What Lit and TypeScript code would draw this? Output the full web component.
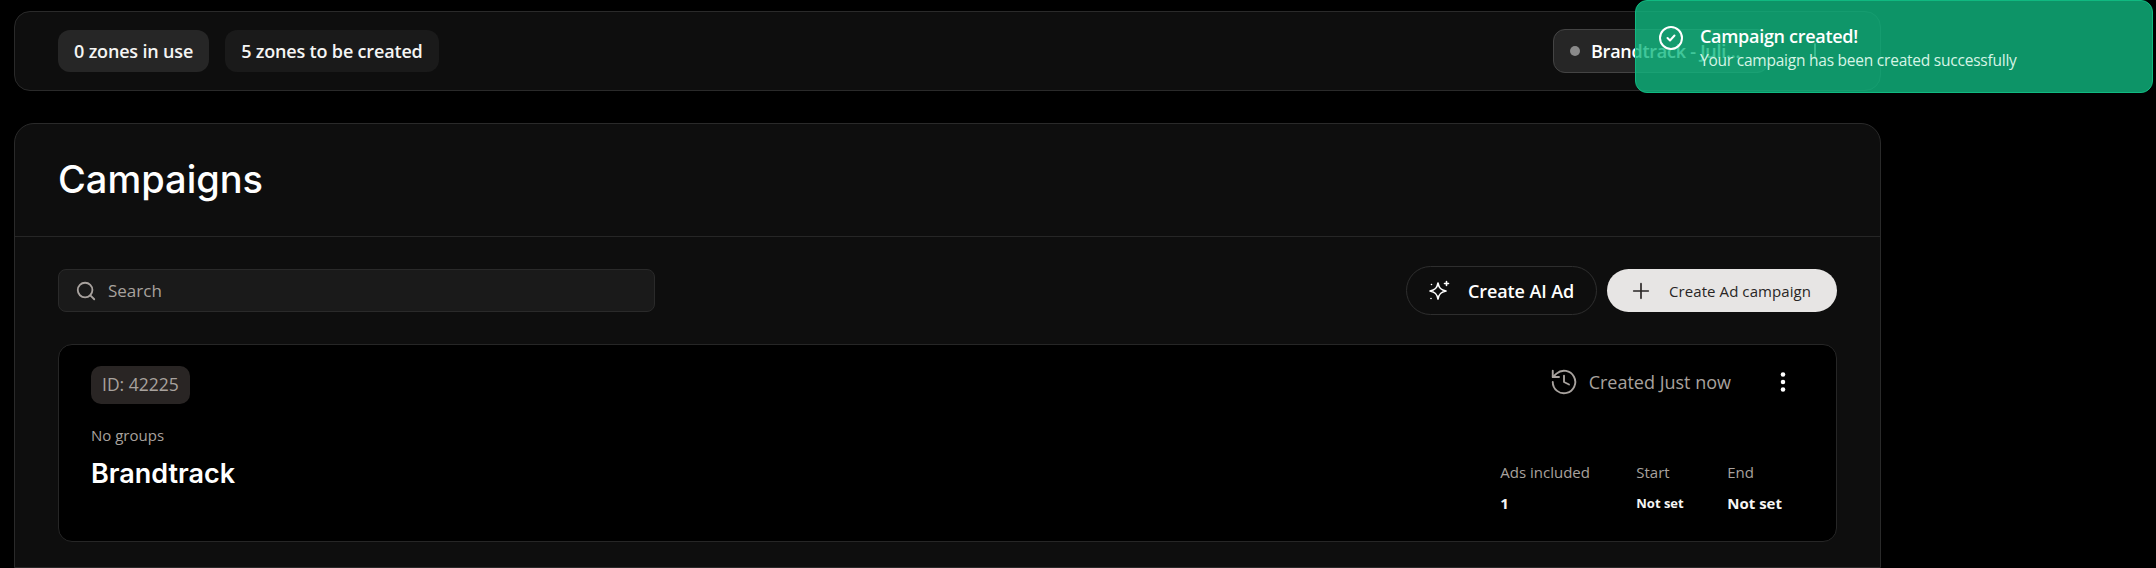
import { LitElement, html, css } from "lit";
import { customElement } from "lit/decorators.js";

@customElement("app-root")
export class AppRoot extends LitElement {
  static styles = css`
    :host { display: block; width: 2156px; height: 568px; background: #000; overflow: hidden; position: relative; font-family: "Open Sans", "Noto Sans", sans-serif; color: #fff; box-sizing: border-box; }
    * { box-sizing: border-box; }
    .page { width: 1867px; margin-left: 14px; padding-top: 11px; display: flex; flex-direction: column; gap: 32px; }
    .top { height: 80px; background: #0e0e0e; border: 1px solid #2a2a2a; border-radius: 16px; padding: 0 63px 0 43px; display: flex; align-items: center; justify-content: space-between; }
    .pills { display: flex; gap: 16px; }
    .pill { height: 42px; padding: 0 16px; border-radius: 12px; background: #1a1a1a; display: flex; align-items: center; font-size: 18px; font-weight: 600; color: #f5f5f4; letter-spacing: -0.17px; white-space: nowrap; }
    .pill.active { background: #262626; }
    .right { display: flex; align-items: center; gap: 42px; }
    .selector { width: 216px; height: 44px; background: #262626; border: 1px solid #444; border-radius: 12px; display: flex; align-items: center; padding: 0 16px; gap: 11px; font-size: 18px; font-weight: 600; letter-spacing: -0.25px; white-space: nowrap; }
    .dot { width: 10px; height: 10px; border-radius: 50%; background: #8a8a8a; flex: none; }
    .main { background: #0e0e0e; border: 1px solid #2a2a2a; border-radius: 20px 20px 0 0; height: 445px; }
    .head { height: 113px; border-bottom: 1px solid #262626; padding: 0 0 2px 43px; display: flex; align-items: center; }
    h1 { margin: 0; font-family: "Inter", sans-serif; font-size: 38px; font-weight: 500; letter-spacing: 0; }
    .tools { display: flex; justify-content: space-between; align-items: center; padding: 29px 43px 0; }
    .search { width: 597px; height: 43px; background: #1a1a1a; border: 1px solid #2a2a2a; border-radius: 8px; display: flex; align-items: center; gap: 11px; padding: 0 16px; color: #a8a29e; font-size: 17px; }
    .search svg { flex: none; }
    .actions { display: flex; align-items: center; gap: 10px; }
    .btn { display: flex; align-items: center; border-radius: 999px; white-space: nowrap; }
    .ai { width: 191px; height: 49px; border: 1px solid #2e2e2e; padding-left: 20px; gap: 17px; font-size: 18px; font-weight: 600; letter-spacing: -0.1px; }
    .create { width: 230px; height: 43px; background: #e7e5e4; color: #292524; padding-left: 23px; gap: 17px; font-size: 15px; font-weight: 500; letter-spacing: 0.08px; }
    .card { margin: 29px 43px 0; height: 198px; background: #000; border: 1px solid #262626; border-radius: 14px; padding: 21px 32px 0; }
    .row1 { display: flex; justify-content: space-between; align-items: center; }
    .id { height: 38px; padding: 0 11px 2px; background: #292524; border-radius: 10px; color: #a8a29e; font-size: 17.500px; display: flex; align-items: center; }
    .meta { display: flex; align-items: center; color: #a8a29e; font-size: 18px; margin: -6px 8px 0 0; }
    .meta svg { margin-right: 10px; }
    .meta .kebab { margin: 0 0 0 39px; }
    .row2 { margin-top: 21px; color: #a8a29e; font-size: 15px; line-height: 20px; }
    .row3 { display: flex; justify-content: space-between; align-items: flex-start; margin-top: 9px; }
    h2 { margin: 0; font-family: "Inter", sans-serif; font-size: 27px; font-weight: 600; line-height: 40px; }
    .stats { display: flex; margin-top: 8px; margin-right: 22px; }
    .stat { display: flex; flex-direction: column; gap: 11px; color: #a8a29e; font-size: 15px; line-height: 20px; white-space: nowrap; }
    .stat b { color: #f5f5f4; font-weight: 700; height: 20px; display: flex; align-items: center; }
    .s1 { width: 136px; } .s2 { width: 91px; } .s2 b { font-size: 13px; }
    .toast { position: absolute; left: 1635px; top: 0; width: 518px; height: 93px; background: rgba(16,185,129,.8); border: 1px solid #10b981; border-radius: 12px; display: flex; gap: 17px; padding: 25px 0 0 23px; }
    .t1 { font-size: 18px; font-weight: 600; letter-spacing: -0.3px; line-height: 24px; margin-top: -2px; }
    .t2 { font-size: 15.500px; color: #d6f5e6; letter-spacing: -0.23px; line-height: 22px; margin-top: 1px; }
  `;
  render() {
    return html`
      <div class="page">
        <div class="top">
          <div class="pills"><div class="pill active">0 zones in use</div><div class="pill">5 zones to be created</div></div>
          <div class="right">
            <div class="selector"><span class="dot"></span>Brandtrack - Juli...</div>
            <svg width="6" height="16" viewBox="0 0 6 16" fill="none" stroke="#fff" stroke-width="1.500" stroke-linecap="round"><path d="M4 1v12.500M2 14.500h.5"/></svg>
          </div>
        </div>
        <div class="main">
          <div class="head"><h1>Campaigns</h1></div>
          <div class="tools">
            <div class="search"><svg width="22" height="22" viewBox="0 0 24 24" fill="none" stroke="#a8a29e" stroke-width="2" stroke-linecap="round"><circle cx="11" cy="11" r="8"/><path d="m21 21-4.300-4.300"/></svg>Search</div>
            <div class="actions">
              <div class="btn ai"><svg width="24" height="24" viewBox="0 0 24 24" fill="none" stroke="#fff" stroke-width="1.600" stroke-linecap="round" stroke-linejoin="round"><path d="M11 4c.9 5 2.800 7 8 8-5.200 1-7.100 3-8 8-.9-5-2.800-7-8-8 5.200-1 7.100-3 8-8z"/><path d="M19.500 2.500v4M17.500 4.500h4M4 19.500h.01M4.500 5.500h.01"/></svg>Create AI Ad</div>
              <div class="btn create"><svg width="22" height="22" viewBox="0 0 24 24" fill="none" stroke="#292524" stroke-width="1.800" stroke-linecap="round"><path d="M4 12h16M12 4v16"/></svg>Create Ad campaign</div>
            </div>
          </div>
          <div class="card">
            <div class="row1">
              <div class="id">ID: 42225</div>
              <div class="meta">
                <svg width="30" height="30" viewBox="0 0 24 24" fill="none" stroke="#a8a29e" stroke-width="1.500" stroke-linecap="round" stroke-linejoin="round"><path d="M3 12a9 9 0 1 0 3-6.700L3 8"/><path d="M3 3v5h5"/><path d="M12 7v5l4 2"/></svg>
                Created Just now
                <svg class="kebab" width="26" height="26" viewBox="0 0 24 24" fill="#fff"><circle cx="12" cy="5" r="2.100"/><circle cx="12" cy="12" r="2.100"/><circle cx="12" cy="19" r="2.100"/></svg>
              </div>
            </div>
            <div class="row2">No groups</div>
            <div class="row3">
              <h2>Brandtrack</h2>
              <div class="stats">
                <div class="stat s1">Ads included<b>1</b></div>
                <div class="stat s2">Start<b>Not set</b></div>
                <div class="stat s3">End<b>Not set</b></div>
              </div>
            </div>
          </div>
        </div>
      </div>
      <div class="toast">
        <svg width="24" height="24" viewBox="0 0 24 24" fill="none" stroke="#fff" stroke-width="2" stroke-linecap="round" stroke-linejoin="round"><circle cx="12" cy="12" r="11"/><path d="m8.500 12 2.500 2.500 4.500-5"/></svg>
        <div><div class="t1">Campaign created!</div><div class="t2">Your campaign has been created successfully</div></div>
      </div>
    `;
  }
}
